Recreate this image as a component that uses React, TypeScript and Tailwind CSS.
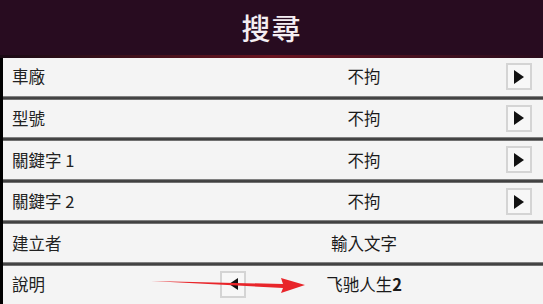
const FONT = "font-['Noto_Sans_CJK_TC','Noto_Sans',sans-serif]"

type Row = { label: string; value: React.ReactNode; arrow?: 'right' | 'left' | null }

const ROWS: Row[] = [
  { label: '車廠', value: '不拘', arrow: 'right' },
  { label: '型號', value: '不拘', arrow: 'right' },
  { label: '關鍵字 1', value: '不拘', arrow: 'right' },
  { label: '關鍵字 2', value: '不拘', arrow: 'right' },
  { label: '建立者', value: '輸入文字', arrow: null },
  {
    label: '說明',
    value: (
      <>
        飞驰人生<span className="font-bold">2</span>
      </>
    ),
    arrow: 'left',
  },
]

function ArrowButton({ dir }: { dir: 'right' | 'left' }) {
  return (
    <div className="flex h-[27px] w-[26px] items-center justify-center border-2 border-[#d4d4d4] bg-[#f7f7f7]">
      {dir === 'right' ? (
        <div className="h-0 w-0 border-y-[7px] border-l-[10px] border-y-transparent border-l-[#111]" />
      ) : (
        <div className="h-0 w-0 border-y-[6px] border-r-[9px] border-y-transparent border-r-[#111]" />
      )}
    </div>
  )
}

function Separator() {
  return <div className="h-[4px] bg-linear-to-b from-[#a0a0a0] via-[#2a2a2a] to-[#8a8a8a]" />
}

export default function App() {
  return (
    <div className={`h-[304px] w-[543px] overflow-hidden bg-black ${FONT}`}>
      {/* Header */}
      <div className="flex h-[55px] items-center justify-center bg-[#280c20]">
        <h1 className="text-[29px] font-medium tracking-[1px] text-[#f4eef2]">搜尋</h1>
      </div>
      <div className="h-[3px] bg-linear-to-r from-[#1a0a14] via-[#6a1420] to-[#2a0c1c]" />

      <div className="ml-[3px]">
        {ROWS.map((r, i) => (
          <div key={r.label}>
            {i > 0 && <Separator />}
            <div className="relative flex h-[37.6px] items-center bg-[#f4f4f4] pl-[9px] pr-[11px] text-[16.5px] text-[#222]">
              <span className="w-[120px]">{r.label}</span>
              <div className="flex flex-1 justify-center pl-[90px]">
                <span className="text-[#1a1a1a]">{r.value}</span>
              </div>
              <div className="flex w-[26px] justify-end">
                {r.arrow === 'right' && <ArrowButton dir="right" />}
              </div>
              {r.arrow === 'left' && (
                <>
                  <div className="absolute left-[217px] top-[5px]">
                    <ArrowButton dir="left" />
                  </div>
                  {/* red annotation arrow */}
                  <svg className="absolute left-[146px] top-[6px]" width="160" height="24" viewBox="0 0 160 24">
                    <path d="M2 9 L134 12 L132 6 L156 13 L132 21 L134 16 Z" fill="#e8252a" />
                  </svg>
                </>
              )}
            </div>
          </div>
        ))}
      </div>
    </div>
  )
}
